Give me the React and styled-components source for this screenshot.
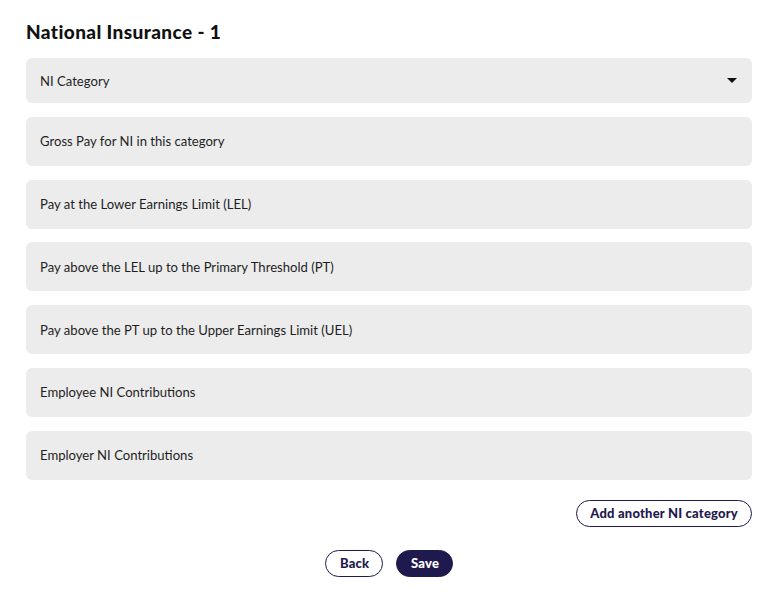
import React from "react";
import styled, { createGlobalStyle } from "styled-components";

const GlobalStyle = createGlobalStyle`
	body {
		margin: 0;
		background: #fff;
		font-family: "Lato", "Liberation Sans", sans-serif;
		color: #1f1f1f;
	}
`;

const Page = styled.div`
	padding: 20px 25px 20px 26px;
	display: flex;
	flex-direction: column;
`;

const Title = styled.h2`
	margin: 0 0 14px;
	font-size: 19px;
	line-height: 24px;
	font-weight: 900;
	color: #111;
	letter-spacing: 0.4px;
`;

const Fields = styled.div`
	display: flex;
	flex-direction: column;
	gap: 13.8px;
`;

const Field = styled.div`
	display: flex;
	align-items: center;
	justify-content: space-between;
	height: ${({ $h }) => $h || 49}px;
	padding: 0 14px;
	background: #ececec;
	border-radius: 6px;
	font-size: 13.1px;
	color: #1f1f1f;
`;

const Caret = styled.span`
	width: 0;
	height: 0;
	border-left: 5px solid transparent;
	border-right: 5px solid transparent;
	border-top: 5px solid #111;
	margin-right: 1px;
`;

const AddRow = styled.div`
	display: flex;
	justify-content: flex-end;
	margin-top: 20px;
`;

const Actions = styled.div`
	display: flex;
	justify-content: center;
	gap: 13px;
	margin-top: 23px;
`;

const Pill = styled.button`
	font-family: "Lato", "Liberation Sans", sans-serif;
	font-weight: 900;
	font-size: 13px;
	height: 27px;
	padding: 0 ${({ $px }) => $px || 14}px;
	border-radius: 14px;
	border: 1px solid #1e1a4d;
	background: ${({ $filled }) => ($filled ? "#1e1a4d" : "#fff")};
	color: ${({ $filled }) => ($filled ? "#fff" : "#1e1a4d")};
	letter-spacing: 0.2px;
	cursor: pointer;
`;

const rows = [
	"Gross Pay for NI in this category",
	"Pay at the Lower Earnings Limit (LEL)",
	"Pay above the LEL up to the Primary Threshold (PT)",
	"Pay above the PT up to the Upper Earnings Limit (UEL)",
	"Employee NI Contributions",
	"Employer NI Contributions",
];

export default function App() {
	return (
		<>
			<GlobalStyle />
			<Page>
				<Title>National Insurance - 1</Title>
				<Fields>
					<Field $h={45}>
						<span>NI Category</span>
						<Caret />
					</Field>
					{rows.map((r) => (
						<Field key={r}>{r}</Field>
					))}
				</Fields>
				<AddRow>
					<Pill $px={13}>Add another NI category</Pill>
				</AddRow>
				<Actions>
					<Pill style={{ width: 58 }}>Back</Pill>
					<Pill $filled style={{ width: 57 }}>Save</Pill>
				</Actions>
			</Page>
		</>
	);
}
